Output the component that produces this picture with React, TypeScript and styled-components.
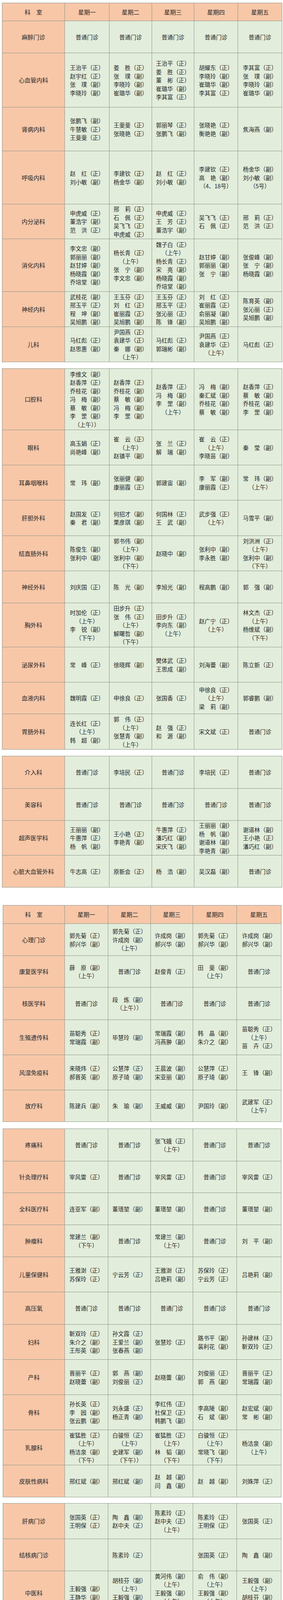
import React from "react";
import styled, { createGlobalStyle } from "styled-components";

const GlobalStyle = createGlobalStyle`
  html, body {
    margin: 0;
    padding: 0;
    background: #ffffff;
    font-family: "Noto Sans CJK SC", "Noto Sans", sans-serif;
    color: #262626;
  }
`;

type Row = { dept: string; h: number; cells: string[] };
type TableData = { header: boolean; gap: number; left: number; cols: string; rows: Row[] };

const WIDE = "160px 114px 109px 108px 112px 113px";
const NARROW = "158px 111px 109px 108px 112px 114px";
const P = "普通门诊";
const all = (s: string) => [s, s, s, s, s];

const tables: TableData[] = [
  {
    header: true,
    gap: 7,
    left: 5,
    cols: WIDE,
    rows: [
      { dept: "麻醉门诊", h: 82, cells: all(P) },
      {
        dept: "心血管内科",
        h: 139,
        cells: [
          "王治平（正）|赵宇红（正）|张　璞（副）|李晓玲（副）",
          "姜　胜（正）|张　璞（副）|李晓玲（副）|崔璐华（副）",
          "王治平（正）|姜　胜（正）|董　彬（正）|崔璐华（副）|李其富（正）",
          "胡耀东（正）|李晓玲（副）|崔璐华（副）|李其富（正）",
          "李其富（正）|张　璞（副）|李晓玲（副）|崔璐华（副）",
        ],
      },
      {
        dept: "肾病内科",
        h: 112,
        cells: [
          "张鹏飞（副）|牛慧敏（正）|王斐斐（正）",
          "王斐斐（正）|张晓艳（正）",
          "郭丽琴（正）|张鹏飞（副）",
          "张晓艳（正）|衡艳艳（副）",
          "焦海燕（副）",
        ],
      },
      {
        dept: "呼吸内科",
        h: 136,
        cells: [
          "赵　红（正）|刘小敏（副）",
          "李建钦（正）|杨金华（副）",
          "赵　红（正）|刘小敏（副）",
          "李建钦（正）|高　艳（副）|（4、18号）",
          "杨金华（副）|刘小敏（副）|（5号）",
        ],
      },
      {
        dept: "内分泌科",
        h: 89,
        cells: [
          "申虎威（正）|董浩宇（副）|范　洪（正）",
          "邢　莉（正）|石　佩（正）|吴飞飞（正）|申虎威（正）",
          "申虎威（正）|王　芳（正）|董浩宇（副）",
          "吴飞飞（正）|石　佩（正）",
          "邢　莉（正）|范　洪（正）",
        ],
      },
      {
        dept: "消化内科",
        h: 135,
        cells: [
          "李文忠（副）|郭丽丽（副）|赵甘婷（副）|杨晓霞（副）|乔培堂（副）",
          "杨长青（正）|（上午）|张　宁（副）|李文忠（副）",
          "魏子白（正）|（上午）|杨长青（正）|宋　亮（副）|杨晓霞（副）|乔培堂（副）",
          "赵甘婷（副）|郭丽丽（副）|张　宁（副）",
          "张俊峰（副）|张　宁（副）|杨晓霞（副）",
        ],
      },
      {
        dept: "神经内科",
        h: 90,
        cells: [
          "武桂花（副）|邢玉平（正）|程　坤（副）|吴旭鹏（副）",
          "王玉芬（正）|刘　红（正）|崔丽霞（正）|吴旭鹏（副）",
          "王玉芬（正）|邢玉平（正）|张沁丽（正）|陈　锋（副）",
          "刘　红（正）|崔丽霞（正）|俞丽凝（副）|吴旭鹏（副）",
          "陈育英（副）|张沁丽（正）|吴旭鹏（副）",
        ],
      },
      {
        dept: "儿科",
        h: 90,
        cells: [
          "马红彪（正）|赵思惠（副）",
          "尹国燕（正）|袁建华（正）|秦　娜（副）|（上午）",
          "马红彪（正）|郭瑞彬（副）",
          "尹国燕（正）|袁建华（正）|（上午）",
          "马红彪（正）",
        ],
      },
    ],
  },
  {
    header: false,
    gap: 16,
    left: 5,
    cols: WIDE,
    rows: [
      {
        dept: "口腔科",
        h: 157,
        cells: [
          "李维文（副）|赵香萍（正）|乔桂花（副）|冯　梅（副）|蔡　敏（副）|李　罡（副）|（上午））",
          "赵香萍（正）|乔桂花（副）|蔡　敏（副）|冯　梅（副）|李　罡（副）",
          "赵香萍（正）|冯　梅（副）|李　罡（副）|（上午）",
          "冯　梅（副）|秦汇斌（副）|乔桂花（副）|蔡　敏（副）",
          "赵香萍（正）|蔡　敏（副）|乔桂花（副）|李　罡（副）",
        ],
      },
      {
        dept: "眼科",
        h: 90,
        cells: [
          "高玉娟（正）|尚艳峰（副）",
          "崔　云（正）|（上午）|赵镇平（副）",
          "张　兰（正）|解　瑞（副）",
          "崔　云（正）|（上午）|李晓苗（副）",
          "秦　莹（副）",
        ],
      },
      {
        dept: "耳鼻咽喉科",
        h: 90,
        cells: [
          "常　玮（副）",
          "张丽健（副）|康丽霞（正）",
          "郭建宙（副）",
          "李　军（副）|康丽霞（正）",
          "常　玮（副）|（上午）",
        ],
      },
      {
        dept: "肝胆外科",
        h: 91,
        cells: [
          "赵国发（正）|秦　君（副）",
          "何招才（副）|栗彦琪（副）",
          "何国林（正）|王　武（副）",
          "武步强（正）|（上午）",
          "马雪平（副）",
        ],
      },
      {
        dept: "结直肠外科",
        h: 90,
        cells: [
          "陈俊生（副）|张利中（副）",
          "郭书伟（副）|（上午）|张利中（副）|（下午）",
          "赵晓中（副）",
          "张利中（副）|李永胜（副）",
          "刘洪洲（正）|（上午）|张利中（副）|（下午）",
        ],
      },
      {
        dept: "神经外科",
        h: 82,
        cells: ["刘庆国（正）", "陈　光（副）", "李旭光（副）", "程高鹏（副）", "郭　强（副）"],
      },
      {
        dept: "胸外科",
        h: 113,
        cells: [
          "时加伦（正）|（上午）|李　锐（副）|（下午）",
          "田步升（正）|张　伟（正）|（上午）|解曙哲（副）|（下午）",
          "田步升（正）|李向东（副）|（上午）",
          "赵广宁（正）|（上午）",
          "林文杰（正）|（上午）|杨维斌（副）|（下午）",
        ],
      },
      {
        dept: "泌尿外科",
        h: 90,
        cells: ["常　峰（正）", "徐晓辉（副）", "樊体武（正）|王思成（副）", "刘海蕾（副）", "陈立新（正）"],
      },
      {
        dept: "血液内科",
        h: 81,
        cells: ["魏明霞（正）", "申徐良（正）", "张国香（正）", "申徐良（正）|（上午）|梁　莉（副）", "郭睿鹏（副）"],
      },
      {
        dept: "胃肠外科",
        h: 91,
        cells: [
          "连长红（正）|（上午）|韩　超（副）",
          "郭　伟（正）|（上午）|张慧青（副）|（上午）",
          "赵　强（正）|和　源（副）",
          "宋文斌（正）",
          P,
        ],
      },
    ],
  },
  {
    header: false,
    gap: 16,
    left: 5,
    cols: WIDE,
    rows: [
      { dept: "介入科", h: 83, cells: [P, "李培民（正）", P, "李培民（正）", P] },
      { dept: "美容科", h: 82, cells: all(P) },
      {
        dept: "超声医学科",
        h: 89,
        cells: [
          "王丽丽（副）|牛惠萍（正）|杨　帆（副）",
          "王小艳（正）|李艳青（副）",
          "牛惠萍（正）|潘巧红（副）|宋庆飞（副）",
          "王丽丽（副）|杨　帆（副）|谢道林（副）|李艳青（副）",
          "谢道林（副）|王小艳（正）|潘巧红（副）",
        ],
      },
      { dept: "心脏大血管外科", h: 82, cells: ["牛志高（正）", "原新会（正）", "杨　浩（副）", "吴汉磊（副）", P] },
    ],
  },
  {
    header: true,
    gap: 45,
    left: 7,
    cols: NARROW,
    rows: [
      {
        dept: "心理门诊",
        h: 82,
        cells: [
          "郭先菊（正）|郝兴华（副）",
          "郭先菊（正）|许成岗（副）|（上午）",
          "许成岗（副）|郝兴华（副）",
          "郭先菊（正）|郝兴华（副）",
          "许成岗（副）|郝兴华（副）",
        ],
      },
      { dept: "康复医学科", h: 81, cells: ["薛　原（副）|（上午）", P, "赵俊青（正）", "田　斐（副）|（上午）", P] },
      { dept: "核医学科", h: 83, cells: [P, "段　炼（副）|（上午））", P, P, P] },
      {
        dept: "生殖遗传科",
        h: 90,
        cells: [
          "苗聪秀（正）|常瑞霞（副）",
          "毕慧玲（副）",
          "常瑞霞（副）|冯燕翀（副）",
          "韩　晶（副）|朱介之（副）",
          "苗聪秀（正）|（上午）|苗　卉（正）",
        ],
      },
      {
        dept: "风湿免疫科",
        h: 90,
        cells: [
          "来晓炜（正）|郝晋英（副）",
          "公慧萍（正）|原子琦（副）",
          "王晨波（副）|宋亚丽（副）",
          "公慧萍（正）|原子琦（副）",
          "王　锋（副）",
        ],
      },
      {
        dept: "放疗科",
        h: 81,
        cells: ["陈建兵（副）", "朱　瑜（副）", "王威威（副）", "尹国玲（副）", "武建军（正）|（上午）"],
      },
    ],
  },
  {
    header: false,
    gap: 17,
    left: 7,
    cols: NARROW,
    rows: [
      { dept: "疼痛科", h: 83, cells: [P, P, "张飞娥（正）|（上午）", P, P] },
      { dept: "针灸理疗科", h: 81, cells: ["宰风雷（正）", P, "宰风雷（正）", P, "宰风雷（正）"] },
      { dept: "全科医疗科", h: 82, cells: ["连亚军（副）", "董瑨堃（副）", "董瑨堃（副）", P, "董瑨堃（副）"] },
      { dept: "肿瘤科", h: 82, cells: ["常建兰（副）|（下午）", P, "常建兰（副）|（上午）", P, "刘　平（副）"] },
      {
        dept: "儿童保健科",
        h: 90,
        cells: [
          "王雅澍（正）|苏保玲（正）",
          "宁云芳（正）",
          "王雅澍（正）|吕艳莉（副）",
          "苏保玲（正）|宁云芳（正）",
          "吕艳莉（副）",
        ],
      },
      { dept: "高压氧", h: 83, cells: all(P) },
      {
        dept: "妇科",
        h: 90,
        cells: [
          "靳双玲（正）|朱介之（副）|王彤英（副）",
          "孙文霞（正）|王爱兰（副）|张春燕（副）",
          "张慧珍（正）",
          "路书平（副）|裴利花（副）",
          "孙建林（正）|靳双玲（正）",
        ],
      },
      {
        dept: "产科",
        h: 90,
        cells: [
          "晋丽平（正）|赵晓蕾（副）",
          "郭　燕（副）|刘俊丽（正）",
          "赵晓蕾（副）",
          "刘俊丽（正）|郭　燕（副）",
          "晋丽平（正）|常瑞霞（副）",
        ],
      },
      {
        dept: "骨科",
        h: 90,
        cells: [
          "孙长英（正）|李　园（副）|张云鹏（副）",
          "刘永盛（正）|杨正青（副）",
          "李红伟（正）|杜保卫（正）|韩鹏飞（副）",
          "李高陵（副）|石　斌（副）",
          "赵宏斌（副）|常　彬（副）",
        ],
      },
      {
        dept: "乳腺科",
        h: 90,
        cells: [
          "崔猛胜（正）|（上午）|杨洁泉（副）|（下午）",
          "白骏恒（正）|（上午）|史建军（副）|（下午））",
          "崔猛胜（正）|（上午）|林　韬（副）|（下午）",
          "白骏恒（正）|（上午）|常晓飞（副）|（下午）",
          "杨洁泉（副）|（上午）",
        ],
      },
      {
        dept: "皮肤性病科",
        h: 82,
        cells: ["邢红斌（副）", "邢红斌（副）", "赵　越（副）|闫　鑫（副）", "赵　越（副）", "刘姝萍（正）"],
      },
    ],
  },
  {
    header: false,
    gap: 15,
    left: 7,
    cols: NARROW,
    rows: [
      {
        dept: "肝病门诊",
        h: 91,
        cells: [
          "张国英（正）|王明保（正）",
          "陶　鑫（副）|赵中夫（正）",
          "陈素玲（正）|赵中夫（正）|（上午）",
          "陈素玲（正）|王明保（正）",
          "张国英（正）",
        ],
      },
      { dept: "结核病门诊", h: 82, cells: ["", "陈素玲（正）", "", "张国英（正）", "陶　鑫（副）"] },
      {
        dept: "中医科",
        h: 112,
        cells: [
          "王毅强（副）|王静华（副）",
          "胡桂芬（副）|（上午）|王毅强（副）|王静华（副）",
          "黄河伟（副）|（上午）|王毅强（副）|（上午）|王静华（副）",
          "俞　伟（副）|（上午）|王毅强（副）|（上午）|王静华（副）",
          "王毅强（副）|（上午）|胡桂芬（副）|王静华（副）",
        ],
      },
      { dept: "老年病科", h: 84, cells: [P, "陈东芳（副）", P, "卫杏利（副）", P] },
      { dept: "药师门诊", h: 80, cells: all("普通门诊|（上午）") },
    ],
  },
];

const DAYS = ["星期一", "星期二", "星期三", "星期四", "星期五"];

const Page = styled.div`
  width: 724px;
  display: flex;
  flex-direction: column;
  align-items: flex-start;
`;

const Table = styled.div<{ $gap: number; $left: number }>`
  margin: ${(p) => p.$gap}px 0 0 ${(p) => p.$left}px;
  flex: none;
  border-top: 1px solid #8c968a;
  border-left: 1px solid #8c968a;
`;

const RowLine = styled.div<{ $h: number; $cols: string }>`
  display: grid;
  grid-template-columns: ${(p) => p.$cols};
  grid-template-rows: ${(p) => p.$h}px;
  height: ${(p) => p.$h}px;
`;

const Cell = styled.div<{ $tone: "head" | "dept" | "body" }>`
  box-sizing: border-box;
  min-height: 0;
  border-right: 1px solid #8c968a;
  border-bottom: 1px solid #8c968a;
  background: ${(p) => (p.$tone === "body" ? "#e2eddb" : "#f7c7a8")};
  display: flex;
  flex-direction: column;
  align-items: center;
  justify-content: center;
  font-size: ${(p) => (p.$tone === "body" ? "14.5px" : "15px")};
  line-height: 21.5px;
  white-space: nowrap;
  color: #242424;
`;

const Line = styled.span`
  display: block;
  flex: none;
`;

export default function App() {
  return (
    <>
      <GlobalStyle />
      <Page>
        {tables.map((t, ti) => (
          <Table key={ti} $gap={t.gap} $left={t.left}>
            {t.header && (
              <RowLine $h={ti === 0 ? 46 : 47} $cols={t.cols}>
                <Cell $tone="head">科　室</Cell>
                {DAYS.map((d) => (
                  <Cell key={d} $tone="head">
                    {d}
                  </Cell>
                ))}
              </RowLine>
            )}
            {t.rows.map((r) => (
              <RowLine key={r.dept} $h={r.h} $cols={t.cols}>
                <Cell $tone="dept">{r.dept}</Cell>
                {r.cells.map((c, ci) => (
                  <Cell key={ci} $tone="body">
                    {c
                      .split("|")
                      .filter(Boolean)
                      .map((l, li) => (
                        <Line key={li}>{l}</Line>
                      ))}
                  </Cell>
                ))}
              </RowLine>
            ))}
          </Table>
        ))}
      </Page>
    </>
  );
}
